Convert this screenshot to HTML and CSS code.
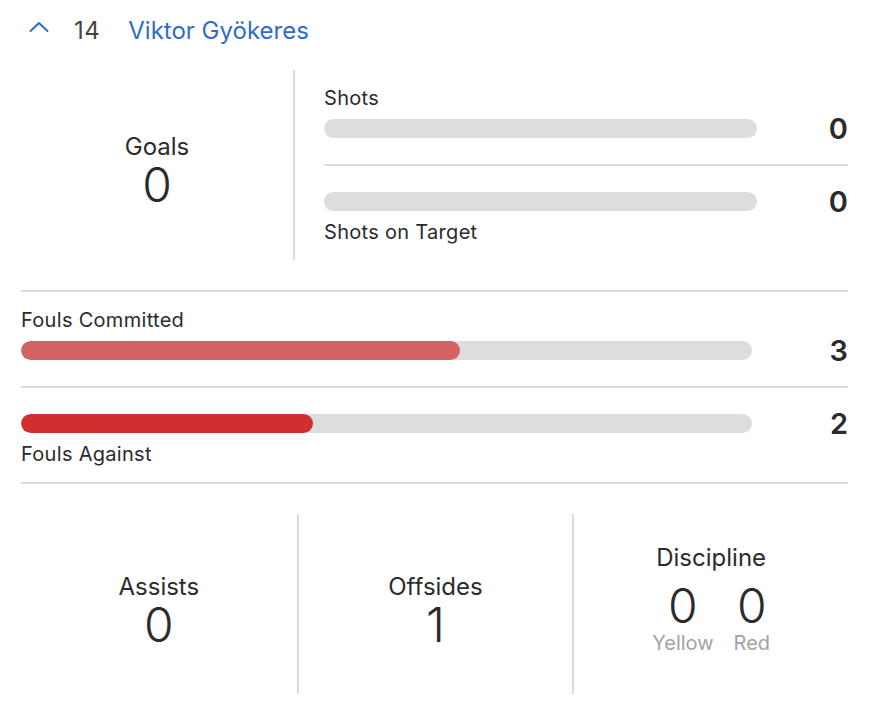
FILE: index.html
```html
<!DOCTYPE html>
<html>
<head>
<meta charset="utf-8">
<link rel="stylesheet" href="styles.css">
</head>
<body>
<div class="card">
  <div class="header">
    <svg class="caret" width="20" height="12" viewBox="0 0 20 12"><path d="M1.5 10 L10 2 L18.5 10" fill="none" stroke="#2f6bc9" stroke-width="2" stroke-linecap="round" stroke-linejoin="round"/></svg>
    <span class="num">14</span>
    <span class="name">Viktor Gyökeres</span>
  </div>

  <div class="top">
    <div class="big-stat">
      <div class="big-label">Goals</div>
      <div class="big-value">0</div>
    </div>
    <div class="bars">
      <div class="bar-row first">
        <div class="bar-label">Shots</div>
        <div class="bar"><div class="fill" style="width:0%"></div></div>
        <div class="bar-value">0</div>
      </div>
      <div class="bar-row second">
        <div class="bar"><div class="fill" style="width:0%"></div></div>
        <div class="bar-value">0</div>
        <div class="bar-label">Shots on Target</div>
      </div>
    </div>
  </div>

  <div class="fouls">
    <div class="bar-row first wide">
      <div class="bar-label">Fouls Committed</div>
      <div class="bar"><div class="fill committed" style="width:60%"></div></div>
      <div class="bar-value">3</div>
    </div>
    <div class="bar-row second wide">
      <div class="bar"><div class="fill against" style="width:40%"></div></div>
      <div class="bar-value">2</div>
      <div class="bar-label">Fouls Against</div>
    </div>
  </div>

  <div class="bottom">
    <div class="col">
      <div class="big-label">Assists</div>
      <div class="big-value">0</div>
    </div>
    <div class="col">
      <div class="big-label">Offsides</div>
      <div class="big-value">1</div>
    </div>
    <div class="col discipline">
      <div class="big-label">Discipline</div>
      <div class="cards">
        <div class="card-stat">
          <div class="big-value">0</div>
          <div class="sub">Yellow</div>
        </div>
        <div class="card-stat">
          <div class="big-value">0</div>
          <div class="sub">Red</div>
        </div>
      </div>
    </div>
  </div>
</div>
</body>
</html>
```

FILE: styles.css
```css
* { box-sizing: border-box; }
html, body { margin: 0; padding: 0; background: #fff; }
body {
  font-family: Inter, "Noto Sans", "Liberation Sans", sans-serif;
  color: #2b2b2b;
}
.card {
  width: 880px;
  padding: 0 32px 0 21px;
}
.header {
  height: 60px;
  display: flex;
  align-items: center;
  padding-left: 8px;
}
.caret { margin-right: 25px; margin-top: -6px; }
.num { font-size: 24px; color: #444; margin-right: 28px; letter-spacing: 0.5px; }
.name { font-size: 24px; color: #2f6bc9; }

.top {
  margin-top: 10px;
  display: grid;
  grid-template-columns: 272px 1fr;
  height: 190px;
}
.big-stat {
  display: flex;
  flex-direction: column;
  align-items: center;
  justify-content: center;
  padding-top: 14px;
}
.big-label { font-size: 24px; line-height: 26px; color: #2b2b2b; }
.big-value { font-size: 48px; line-height: 50px; font-weight: 300; color: #2b2b2b; }

.bars {
  border-left: 2px solid #dcdcdc;
  padding-left: 29px;
}
.bar-row {
  display: grid;
  grid-template-columns: 1fr 91px;
  align-items: center;
}
.bar-row.wide { grid-template-columns: 1fr 96px; }
.bar-row.first {
  padding: 16px 0 26px;
  border-bottom: 2px solid #dcdcdc;
}
.bar-row.second { padding: 26px 0 15px; }
.bar-row .bar-label { grid-column: 1 / -1; }
.bar-row.first .bar-label { margin-bottom: 9px; }
.bar-row.second .bar-label { margin-top: 9px; }
.bar-label { font-size: 20px; line-height: 24px; color: #2b2b2b; letter-spacing: 0.3px; }
.bar {
  height: 19px;
  border-radius: 10px;
  background: #dcdddf;
  overflow: hidden;
}
.fill { height: 100%; border-radius: 10px; }
.fill.committed { background: #d46262; }
.fill.against { background: #d12e2e; }
.bar-value {
  text-align: right;
  font-size: 29px;
  line-height: 19px;
  font-weight: 600;
  color: #2b2b2b;
}

.fouls {
  margin-top: 30px;
  border-top: 2px solid #dcdcdc;
  border-bottom: 2px solid #dcdcdc;
}
.fouls .bar-row.first { padding-bottom: 26px; }
.fouls .bar-row.second { padding-top: 26px; padding-bottom: 16px; }

.bottom {
  margin-top: 30px;
  display: grid;
  grid-template-columns: 1fr 1fr 1fr;
  height: 180px;
}
.col {
  display: flex;
  flex-direction: column;
  align-items: center;
  justify-content: center;
  padding-top: 16px;
}
.col.discipline { padding-top: 0; padding-bottom: 9px; }
.col + .col { border-left: 2px solid #dcdcdc; }
.cards { display: flex; gap: 20px; margin-top: 11px; }
.card-stat { display: flex; flex-direction: column; align-items: center; }
.cards .big-value { line-height: 48px; }
.sub { font-size: 20px; line-height: 24px; color: #a3a3a3; margin-top: 1px; }
```
